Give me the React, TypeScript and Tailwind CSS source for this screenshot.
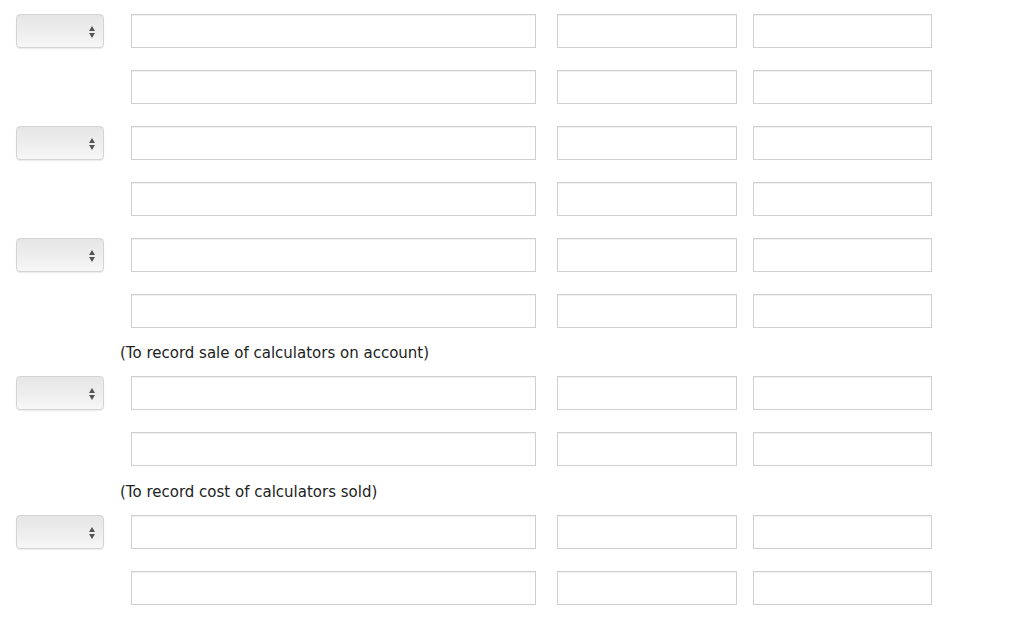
import React from "react";

const Select = () => (
  <div className="relative h-[34px] w-[88px] shrink-0 rounded-[4px] border border-[#d4d4d4] bg-gradient-to-b from-[#e6e6e6] via-[#ededed] to-[#f7f7f7] shadow-[0_1px_1px_rgba(0,0,0,0.08)]">
    <svg
      className="absolute right-[7px] top-[10px]"
      width="8"
      height="14"
      viewBox="0 0 8 14"
    >
      <path d="M4 1 L7 6 L1 6 Z" fill="#555" />
      <path d="M1 8 L7 8 L4 13 Z" fill="#555" />
    </svg>
  </div>
);

const Field = ({ w }: { w: string }) => (
  <div
    className={`h-[34px] ${w} shrink-0 border border-[#cfcfcf] bg-white shadow-[inset_0_1px_1px_rgba(0,0,0,0.06)]`}
  />
);

const Row = ({ select }: { select?: boolean }) => (
  <div className="flex items-center">
    <div className="w-[115px] shrink-0">{select && <Select />}</div>
    <Field w="w-[405px]" />
    <div className="w-[21px] shrink-0" />
    <Field w="w-[180px]" />
    <div className="w-[16px] shrink-0" />
    <Field w="w-[179px]" />
  </div>
);

const Note = ({ children, h }: { children: React.ReactNode; h: string }) => (
  <p
    className={`flex ${h} items-center pl-[104px] pt-[3px] text-[15px] text-[#222]`}
  >
    {children}
  </p>
);

export default function App() {
  return (
    <div
      className="min-h-[619px] bg-white pl-[16px] pt-[14px]"
      style={{ fontFamily: "Tahoma, 'DejaVu Sans', Verdana, sans-serif" }}
    >
      <div className="flex flex-col gap-[22px]">
        <Row select />
        <Row />
        <Row select />
        <Row />
        <Row select />
        <Row />
      </div>
      <Note h="h-[48px]">(To record sale of calculators on account)</Note>
      <div className="flex flex-col gap-[22px]">
        <Row select />
        <Row />
      </div>
      <Note h="h-[49px]">(To record cost of calculators sold)</Note>
      <div className="flex flex-col gap-[22px]">
        <Row select />
        <Row />
      </div>
    </div>
  );
}
